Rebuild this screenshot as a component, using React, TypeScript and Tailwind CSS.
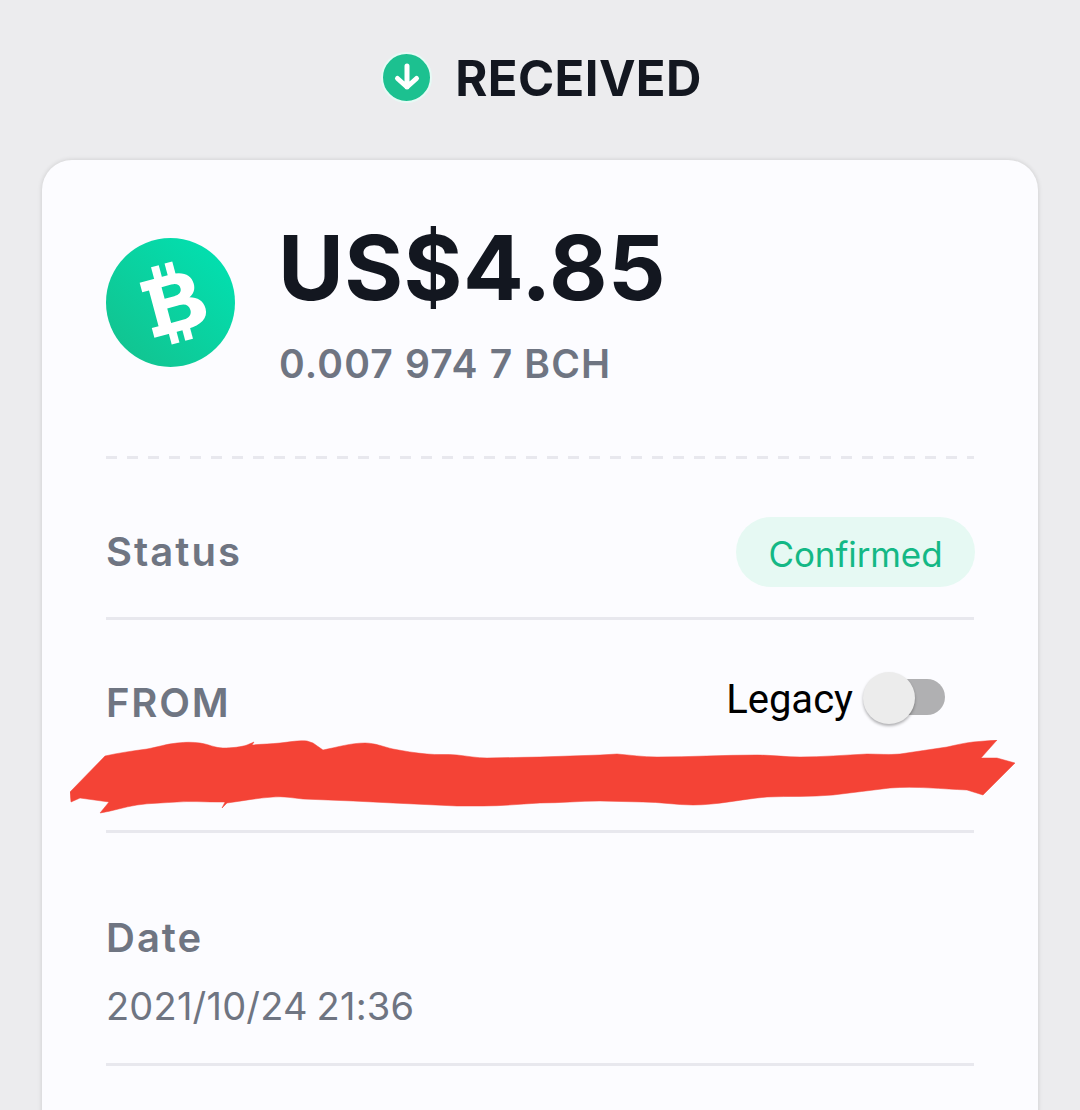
import React from 'react';

const inter = 'font-["Inter","Noto_Sans",sans-serif]';

const CoinLogo = () => (
    <svg width="129" height="129" viewBox="0 0 129 129" className="shrink-0">
        <defs>
            <linearGradient id="coin" x1="1" y1="0" x2="0" y2="1">
                <stop offset="0" stopColor="#00e3b4" />
                <stop offset="1" stopColor="#14c08c" />
            </linearGradient>
        </defs>
        <circle cx="64.5" cy="64.5" r="64.5" fill="url(#coin)" />
        <g transform="rotate(-15 66 65)" fill="#fff">
            <rect x="55" y="25" width="8" height="15" />
            <rect x="69" y="25" width="8" height="15" />
            <rect x="55" y="90" width="8" height="15" />
            <rect x="69" y="90" width="8" height="15" />
            <path
                fillRule="evenodd"
                d="M40 37H72C85 37 92 43 92 52C92 58 89 62 84 64C92 66 97 71 97 79C97 89 88 94 75 94H40V84H47V47H40ZM60 47V59H70C75 59 78 57 78 53C78 49 75 47 70 47ZM60 69V84H73C79 84 82 81 82 76.500C82 72 79 69 73 69Z"
            />
        </g>
    </svg>
);

const Scribble = () => (
    <svg width="950" height="76" viewBox="70 740 950 76" className="absolute left-[-36px] top-[120px]">
        <path
            fill="#f44336"
            stroke="#f44336"
            strokeWidth="0.5"
            d="M71 802L70 792L105 756C118 753 132 751 147 749C158 747 166 744 177 743C186 742 192 742 200 743C208 744 215 748 223 748C232 748 241 747 247 745L254 742L252 745C262 744 271 744 280 743C290 742 299 740 307 741L313 743L323 750C338 747 351 743 365 743C375 743 384 747 393 749C404 751 415 753 427 754C437 755 447 754 457 755C467 756 477 758 487 758C505 758 522 757 540 757C560 756 580 756 600 755L617 754C630 755 643 757 657 757C690 757 723 755 757 755C771 755 785 757 800 757C822 757 845 755 867 754C878 754 889 755 900 754C916 752 931 749 947 747C956 745 964 743 973 742L997 740L981 758L997 758L1015 763L983 795L967 790C942 789 916 786 890 788C871 790 852 793 833 795C811 797 789 796 767 797C742 799 718 805 693 805C676 805 660 802 643 802L600 801C580 801 560 803 540 803C521 804 502 806 483 806C474 806 466 806 457 806C436 805 414 804 393 803C380 802 366 802 353 801C336 800 320 800 303 799C293 798 283 796 273 797C257 798 242 801 227 803L222 808L225 802L217 802C204 802 190 801 177 802C164 803 150 803 137 805C124 807 113 811 100 813L109 802L80 798Z"
        />
    </svg>
);

export default function App() {
    return (
        <div className={`h-[1110px] overflow-hidden bg-[#ececee] ${inter}`}>
            {/* Header */}
            <div className="flex h-[160px] items-center justify-center gap-[23px] pb-[4px] pl-[3px]">
                <div className="mb-[2px] flex h-[51px] w-[51px] items-center justify-center rounded-full border-[2px] border-[#e6faf5] bg-[#1cc190]">
                    <svg width="30" height="30" viewBox="0 0 30 30" fill="none" stroke="#fff" strokeWidth="5" strokeLinecap="round" strokeLinejoin="round">
                        <path d="M15 4V25M5.500 16.500L15 25L24.500 16.500" />
                    </svg>
                </div>
                <span className="text-[49px] leading-none font-bold tracking-[0.4px] text-[#131720]">RECEIVED</span>
            </div>

            {/* Card */}
            <div className="mx-[42px] rounded-[30px] bg-[#fcfcff] px-[64px] pt-[78px] pb-[60px] shadow-[0_0_5px_rgba(0,0,0,0.14)]">
                <div className="flex items-start gap-[43px]">
                    <CoinLogo />
                    <div className="-mt-[23px]">
                        <div className="text-[90px] leading-[106px] font-bold tracking-[0.4px] text-[#131720]">US$4.85</div>
                        <div className="mt-[21px] ml-[1px] text-[39px] leading-[44px] font-semibold tracking-[1.15px] text-[#6f7582]">0.007 974 7 BCH</div>
                    </div>
                </div>

                <div className="mt-[70px] h-[3px] bg-[repeating-linear-gradient(90deg,#e8e8ee_0,#e8e8ee_11px,transparent_11px,transparent_21px)]" />

                <div className="flex h-[161px] items-center justify-between border-b-[3px] border-[#e8e8ee] pt-[27px]">
                    <span className="text-[40px] font-semibold tracking-[2px] text-[#6f7582]">Status</span>
                    <span className="-mr-[1px] flex h-[70px] w-[239px] items-center justify-center rounded-[35px] bg-[#e6f9f3] pt-[5px] text-[35px] tracking-[-0.1px] text-[#14b885]">Confirmed</span>
                </div>

                <div className="relative h-[213px] border-b-[3px] border-[#e8e8ee]">
                    <div className="flex items-start justify-between pt-[59px]">
                        <span className="text-[40px] leading-[48px] font-semibold tracking-[1.8px] text-[#6f7582]">FROM</span>
                        <div className="-mt-[3px] mr-[29px] flex items-center gap-[10px]">
                            <span className="font-['Roboto',sans-serif] text-[40px] leading-[48px] text-black">Legacy</span>
                            <div className="relative mb-[6px] h-[36px] w-[82px]">
                                <div className="absolute top-0 right-0 h-[36px] w-[60px] rounded-full bg-[#b0b0b2]" />
                                <div className="absolute top-[-7px] left-0 h-[52px] w-[52px] rounded-full bg-[#ececec] shadow-[0_2px_3px_rgba(0,0,0,0.3)]" />
                            </div>
                        </div>
                    </div>
                    <Scribble />
                </div>

                <div className="border-b-[3px] border-[#e8e8ee] pt-[81px] pb-[35px]">
                    <div className="text-[40px] leading-[48px] font-semibold tracking-[2px] text-[#6f7582]">Date</div>
                    <div className="mt-[22px] text-[38px] leading-[44px] tracking-[0.2px] text-[#6f7582] [word-spacing:-2px]">2021/10/24 21:36</div>
                </div>

                <div className="h-[100px]" />
            </div>
        </div>
    );
}
